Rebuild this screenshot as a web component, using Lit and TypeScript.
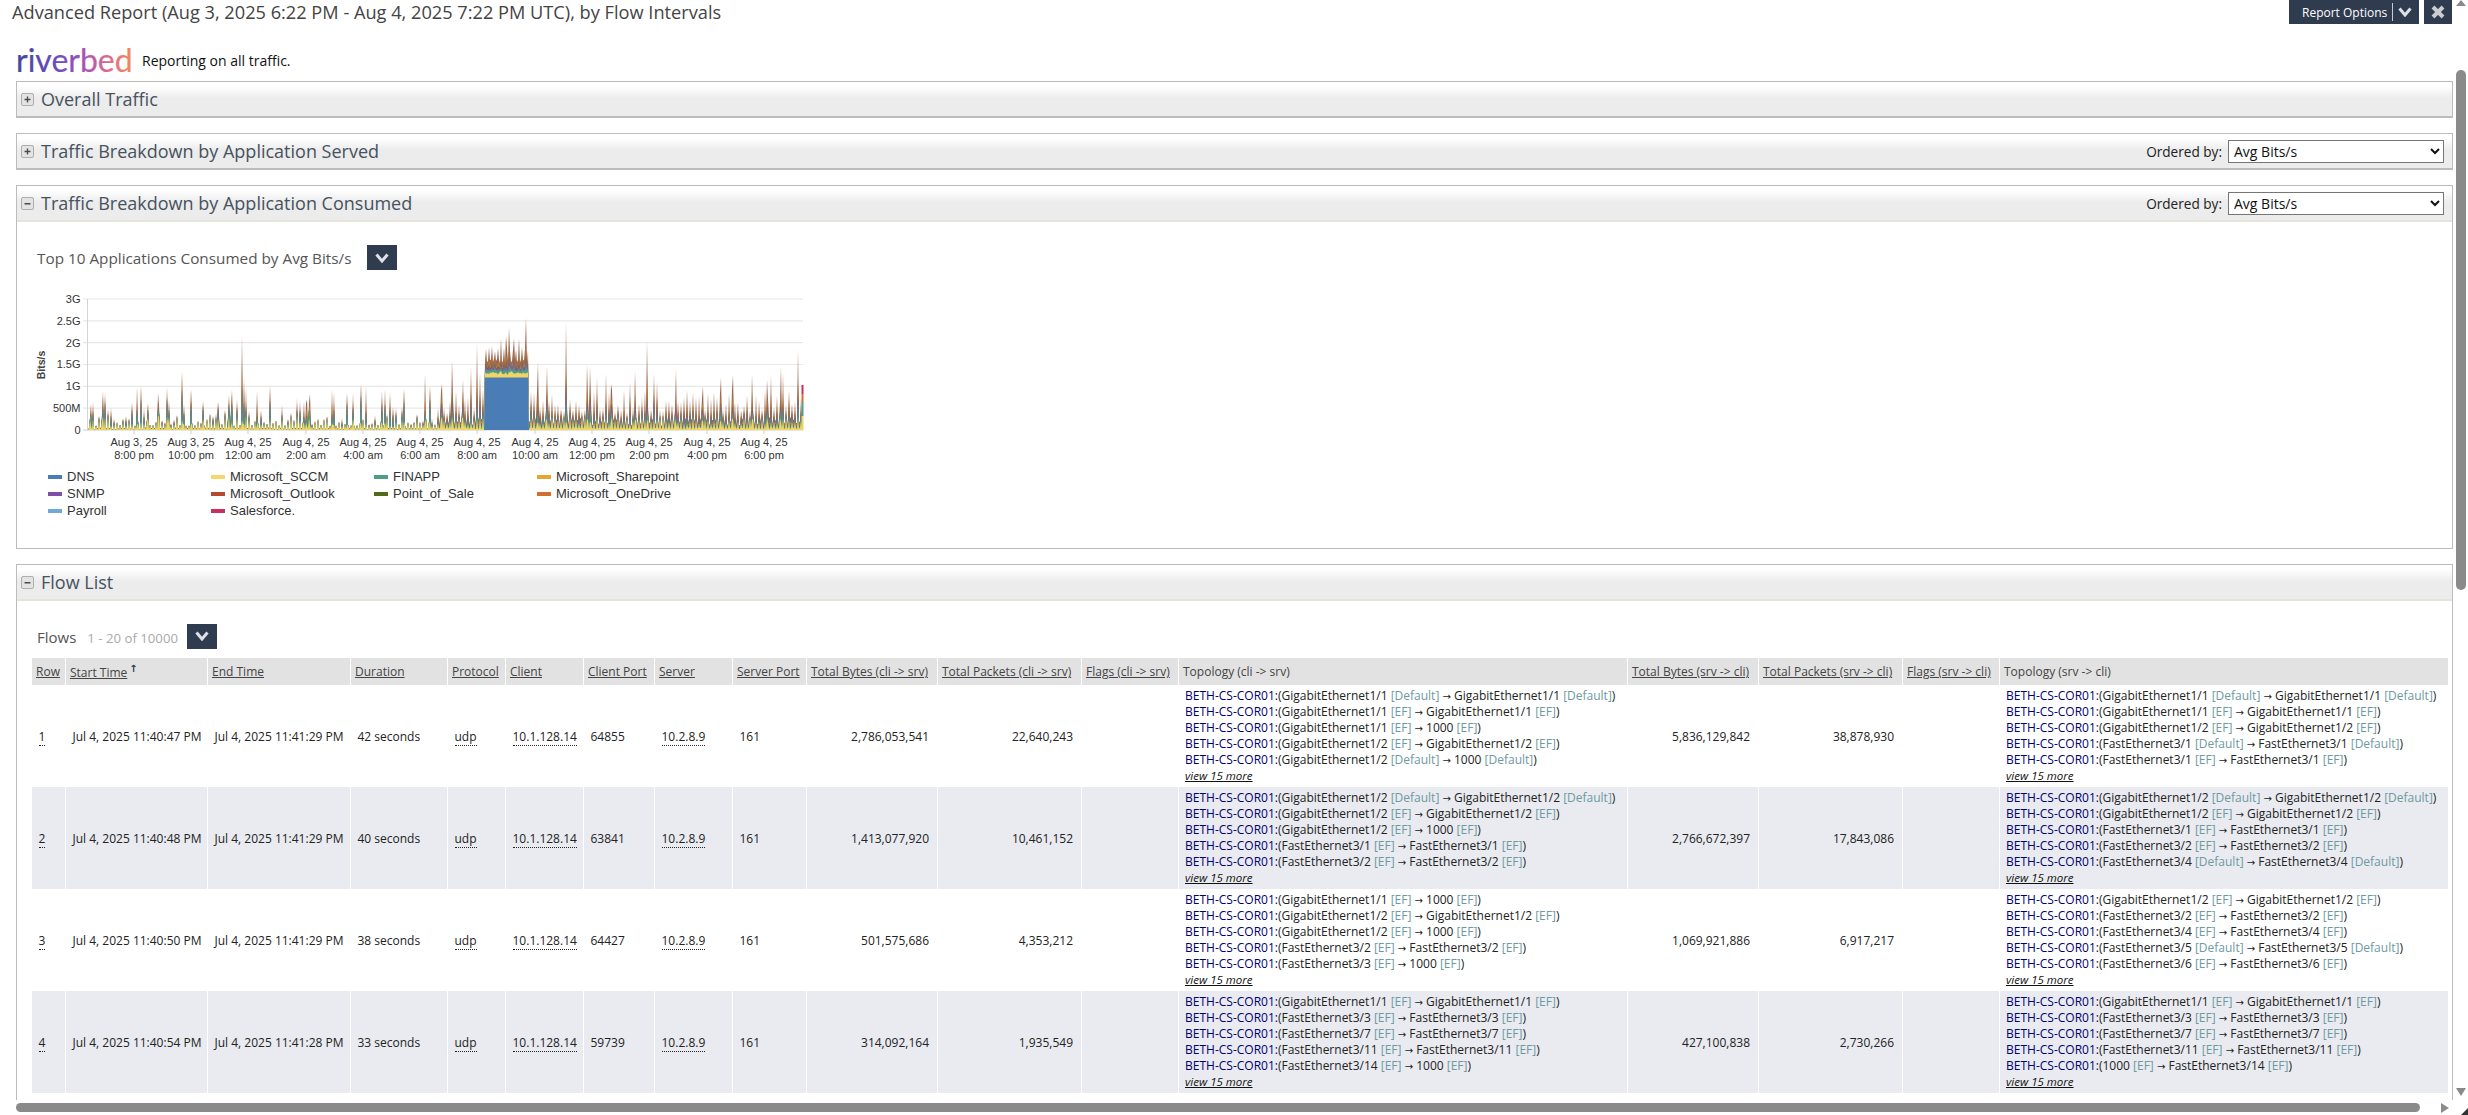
import { LitElement, html, css, svg } from "lit";
import { customElement } from "lit/decorators.js";

const COLS = [33, 142, 143, 97, 58, 78, 71, 78, 74, 131, 144, 97, 449, 131, 144, 97, 449];

const HEAD: [string, boolean][] = [
  ["Row", true], ["Start Time", true], ["End Time", true], ["Duration", true], ["Protocol", true],
  ["Client", true], ["Client Port", true], ["Server", true], ["Server Port", true],
  ["Total Bytes (cli -> srv)", true], ["Total Packets (cli -> srv)", true], ["Flags (cli -> srv)", true],
  ["Topology (cli -> srv)", false],
  ["Total Bytes (srv -> cli)", true], ["Total Packets (srv -> cli)", true], ["Flags (srv -> cli)", true],
  ["Topology (srv -> cli)", false],
];

interface Flow {
  n: string; start: string; end: string; dur: string; port: string;
  b1: string; p1: string; t1: string[]; b2: string; p2: string; t2: string[];
}

const ROWS: Flow[] = [
  { n: "1", start: "Jul 4, 2025 11:40:47 PM", end: "Jul 4, 2025 11:41:29 PM", dur: "42 seconds", port: "64855",
    b1: "2,786,053,541", p1: "22,640,243", b2: "5,836,129,842", p2: "38,878,930",
    t1: ["G1/1 D>G1/1 D", "G1/1 E>G1/1 E", "G1/1 E>1000 E", "G1/2 E>G1/2 E", "G1/2 D>1000 D"],
    t2: ["G1/1 D>G1/1 D", "G1/1 E>G1/1 E", "G1/2 E>G1/2 E", "F3/1 D>F3/1 D", "F3/1 E>F3/1 E"] },
  { n: "2", start: "Jul 4, 2025 11:40:48 PM", end: "Jul 4, 2025 11:41:29 PM", dur: "40 seconds", port: "63841",
    b1: "1,413,077,920", p1: "10,461,152", b2: "2,766,672,397", p2: "17,843,086",
    t1: ["G1/2 D>G1/2 D", "G1/2 E>G1/2 E", "G1/2 E>1000 E", "F3/1 E>F3/1 E", "F3/2 E>F3/2 E"],
    t2: ["G1/2 D>G1/2 D", "G1/2 E>G1/2 E", "F3/1 E>F3/1 E", "F3/2 E>F3/2 E", "F3/4 D>F3/4 D"] },
  { n: "3", start: "Jul 4, 2025 11:40:50 PM", end: "Jul 4, 2025 11:41:29 PM", dur: "38 seconds", port: "64427",
    b1: "501,575,686", p1: "4,353,212", b2: "1,069,921,886", p2: "6,917,217",
    t1: ["G1/1 E>1000 E", "G1/2 E>G1/2 E", "G1/2 E>1000 E", "F3/2 E>F3/2 E", "F3/3 E>1000 E"],
    t2: ["G1/2 E>G1/2 E", "F3/2 E>F3/2 E", "F3/4 E>F3/4 E", "F3/5 D>F3/5 D", "F3/6 E>F3/6 E"] },
  { n: "4", start: "Jul 4, 2025 11:40:54 PM", end: "Jul 4, 2025 11:41:28 PM", dur: "33 seconds", port: "59739",
    b1: "314,092,164", p1: "1,935,549", b2: "427,100,838", p2: "2,730,266",
    t1: ["G1/1 E>G1/1 E", "F3/3 E>F3/3 E", "F3/7 E>F3/7 E", "F3/11 E>F3/11 E", "F3/14 E>1000 E"],
    t2: ["G1/1 E>G1/1 E", "F3/3 E>F3/3 E", "F3/7 E>F3/7 E", "F3/11 E>F3/11 E", "1000 E>F3/14 E"] },
];

const LEGEND: [string, string][] = [
  ["DNS", "#4a7db5"], ["Microsoft_SCCM", "#f5d76e"], ["FINAPP", "#4f9d85"], ["Microsoft_Sharepoint", "#e5a530"],
  ["SNMP", "#7f4fa8"], ["Microsoft_Outlook", "#b5482e"], ["Point_of_Sale", "#4f6b1a"], ["Microsoft_OneDrive", "#d1702d"],
  ["Payroll", "#6fa8dc"], ["Salesforce.", "#c9305e"],
];

const TICKS: [number, string, string][] = [
  [134, "Aug 3, 25", "8:00 pm"], [191, "Aug 3, 25", "10:00 pm"], [248, "Aug 4, 25", "12:00 am"],
  [306, "Aug 4, 25", "2:00 am"], [363, "Aug 4, 25", "4:00 am"], [420, "Aug 4, 25", "6:00 am"],
  [477, "Aug 4, 25", "8:00 am"], [535, "Aug 4, 25", "10:00 am"], [592, "Aug 4, 25", "12:00 pm"],
  [649, "Aug 4, 25", "2:00 pm"], [707, "Aug 4, 25", "4:00 pm"], [764, "Aug 4, 25", "6:00 pm"],
];

const YL: [string, number][] = [["3G", 3], ["2.5G", 2.5], ["2G", 2], ["1.5G", 1.5], ["1G", 1], ["500M", 0.5], ["0", 0]];

const SPIKES: [number, number][] = [
  [91, .6], [93, .65], [103, .89], [105, .87], [108, .5], [132, .65], [137, .99], [141, 1.01], [148, .62], [158, .85],
  [167, 1.0], [169, .7], [182, 1.37], [184, .6], [191, .94], [203, .68], [218, .66], [229, .8], [232, .93], [242, 2.2],
  [244, 1.2], [246, .97], [257, .9], [270, 1.03], [304, .65], [307, .7], [310, .83], [332, .93], [334, .87], [347, .85],
  [353, .85], [361, 1.05], [366, 1.0], [382, .9], [385, .95], [390, .88], [404, .96], [425, 1.28], [430, 1.0], [442, 1.05],
  [452, 1.6], [463, 1.15], [471, 1.45], [477, 2.0], [480, 1.3], [501, 2.1], [506, 2.15], [509, 2.35], [514, 2.1], [519, 2.1],
  [526, 2.57], [538, 1.55], [547, 1.47], [566, 2.47], [587, 1.5], [590, 1.45], [597, 1.2], [606, 1.3], [611, 1.05], [630, 1.1],
  [635, 1.35], [647, 2.05], [654, 1.3], [657, 1.1], [676, 1.4], [703, 1.0], [721, 1.2], [733, 1.25], [752, 1.27], [767, 1.15],
  [771, 1.25], [781, 1.45], [783, 1.3], [798, 1.85],
];

function buildLayers() {
  let s = 12345;
  const r = () => { s = (s * 1664525 + 1013904223) >>> 0; return s / 4294967296; };
  const colours = ["#9c6a52", "#c07a3c", "#6f6a2e", "#8459a8", "#4f9d85", "#f0d565", "#4a7db5"];
  const layers: { c: string; pts: number[] }[] = colours.map(c => ({ c, pts: [] }));
  const xs: number[] = [];
  for (let x = 88; x <= 803; x += 1) {
    xs.push(x);
    const sp = SPIKES.find(p => p[0] === x);
    const peak = x % 3 === 0 || !!sp;
    const block = x >= 485 && x <= 528;
    const dense = x > 437;
    let t: number;
    if (block) t = 1.2 + (peak ? 0.6 + r() * 0.2 : 0.32 + r() * 0.12);
    else if (dense) t = peak ? 0.4 + r() * 0.55 : 0.1 + r() * 0.2;
    else t = peak ? 0.1 + r() * r() * 0.65 : 0.01 + r() * 0.05;
    if (sp) t = sp[1];
    const dns = block ? 1.2 : 0;
    const rest = Math.max(0, t - dns);
    let yel: number;
    if (block) yel = Math.min(rest, 0.07 + r() * 0.08);
    else if (dense) yel = Math.min(rest, peak ? 0.14 + r() * 0.16 : 0.02 + r() * 0.03);
    else yel = Math.min(rest, peak ? 0.08 + r() * 0.26 : rest * 0.5);
    const rem = rest - yel;
    const w = dense
      ? [0.1 + r() * 0.2, 0.05 + r() * 0.16, 0.05 + r() * 0.1, 0.06 + r() * 0.14]
      : [0.2 + r() * 0.5, 0.15 + r() * 0.2, 0.02, 0.02];
    const parts = [w[0], w[3], w[2], w[1]];
    const cum = [dns + yel];
    parts.forEach(p => cum.push(cum[cum.length - 1] + rem * p));
    layers[6].pts.push(dns);
    layers[5].pts.push(cum[0]);
    layers[4].pts.push(cum[1]);
    layers[3].pts.push(cum[2]);
    layers[2].pts.push(cum[3]);
    layers[1].pts.push(cum[4]);
    layers[0].pts.push(t);
  }
  const Y = (v: number) => 430 - v * 43.67;
  return layers.map(l => {
    const pts = l.pts.map((v, k) => `${xs[k]},${Y(v).toFixed(1)}`).join(" ");
    return { c: l.c, d: `88,430 ${pts} 803,430` };
  });
}
const LAYERS = buildLayers();

@customElement("topo-line")
class TopoLine extends LitElement {
  static properties = { spec: { type: String } };
  spec = "";
  static styles = css`
    :host { display: block; height: 16px; line-height: 16px; white-space: nowrap; }
    .dev { color: #00006e; }
    .q { color: #6d9aa0; }
    .arr { font-family: "DejaVu Sans", sans-serif; font-size: 10px; }
  `;
  private iface(code: string) {
    if (code === "1000") return "1000";
    return (code[0] === "G" ? "GigabitEthernet" : "FastEthernet") + code.slice(1);
  }
  private end(part: string) {
    const [c, q] = part.split(" ");
    return html`${this.iface(c)} <span class="q">[${q === "D" ? "Default" : "EF"}]</span>`;
  }
  render() {
    const [a, b] = this.spec.split(">");
    return html`<span class="dev">BETH-CS-COR01:</span>(${this.end(a)} <span class="arr">→</span> ${this.end(b)})`;
  }
}

@customElement("app-root")
export class AppRoot extends LitElement {
  static styles = css`
    :host {
      display: block; position: relative; width: 100vw; height: 100vh; overflow: hidden;
      background: #fff; font-family: "Open Sans", sans-serif; color: #333;
    }
    .page { display: flex; flex-direction: column; height: 1100px; padding: 0 15px 0 16px; box-sizing: border-box; }
    .top { display: flex; justify-content: space-between; height: 24px; margin: 0 1px 0 -4px; flex: none; }
    .title { font-size: 18.2px; line-height: 24px; color: #444; white-space: nowrap; }
    .top-btns { display: flex; gap: 5px; }
    .dk { background: #2f3b4f; color: #fff; display: flex; align-items: center; justify-content: center; }
    .opts { width: 130px; height: 24px; font-size: 12px; gap: 5px; justify-content: flex-start; padding-left: 13px; box-sizing: border-box; }
    .opts .sep { width: 1px; height: 18px; background: #c8ccd2; }
    .close { width: 28px; height: 24px; }
    .logo-row { display: flex; align-items: center; height: 57px; padding-top: 15px; box-sizing: border-box; flex: none; gap: 6px; }
    .logo { display: block; flex: none; overflow: visible; }
    .logo-note { font-size: 14px; color: #111; }
    .panel { border: 1px solid #bcbcbc; flex: none; background: #fff; }
    .panel.closed { height: 37px; box-sizing: border-box; margin-bottom: 15px; border-bottom-width: 2px; }
    .panel.open { margin-bottom: 15px; height: 364px; box-sizing: border-box; }
    .panel.last { flex: 1; min-height: 0; overflow: hidden; border-bottom: none; margin-bottom: 0; }
    .hdr {
      display: flex; align-items: center; height: 34px; padding: 0 8px 0 4px;
      background: linear-gradient(#fff 12%, #ececec 48%);
    }
    .panel.open .hdr, .panel.last .hdr { height: 34px; border-bottom: 2px solid #e4e5da; }
    .tgl {
      width: 13px; height: 13px; box-sizing: border-box; border: 1px solid #aeaeae; border-radius: 2px;
      background: #e3e3e3; margin-right: 7px; flex: none; display: block;
    }
    .hdr-t { font-size: 18px; color: #46525f; flex: 1; white-space: nowrap; }
    .ord { font-size: 13.6px; color: #222; margin-right: 6px; }
    select {
      width: 216px; height: 23px; font-family: "Open Sans", sans-serif; font-size: 14px; color: #111;
      background: #fff; padding: 0 0 0 1px;
    }
    .chart-t { display: flex; align-items: center; height: 25px; margin: 23px 0 0 20px; font-size: 15.3px; color: #555; }
    .chart-t .dk { width: 30px; height: 25px; margin-left: 16px; }
    svg.chart { display: block; width: 800px; height: 180px; margin-top: 15px; }
    .legend {
      display: grid; grid-template-columns: repeat(4, 163px); grid-auto-rows: 17px; margin: 3px 0 0 31px;
      font-family: "Liberation Sans", sans-serif; font-size: 13px; color: #333;
    }
    .li { display: flex; align-items: center; gap: 5px; line-height: 17px; }
    .sw { width: 14px; height: 4px; display: block; }
    .flows { display: flex; align-items: center; height: 25px; margin: 23px 0 0 20px; }
    .flows b { font-weight: 400; font-size: 15px; color: #555; margin-right: 11px; }
    .flows i { font-style: normal; font-size: 13.2px; color: #aaa; margin-right: 9px; margin-top: 3px; white-space: nowrap; }
    .flows .dk { width: 30px; height: 25px; margin-top: -1px; }
    .wrap { margin: 9px 0 0 15px; }
    table { border-collapse: separate; border-spacing: 0; table-layout: fixed; width: 2416px; font-size: 12px; color: #222; }
    th {
      background: #e2e2e2; font-weight: 400; height: 27px; padding: 0 0 0 4px; text-align: left; white-space: nowrap;
      border-left: 1px solid #fff; color: #444; overflow: hidden; box-sizing: border-box;
    }
    th:first-child { border-left: none; }
    th u { text-decoration: underline; }
    .sort { font-size: 10px; vertical-align: 5px; margin-left: 2px; color: #2f3b4f; font-family: "DejaVu Sans", sans-serif; font-weight: 700; }
    td {
      height: 102px; box-sizing: border-box; padding: 0 7px 0 6.5px; white-space: nowrap; border-left: 1px solid #fff; vertical-align: middle;
    }
    td:first-child { border-left: none; }
    tbody tr:nth-child(even) td { background: #e9ebf0; }
    td.num { text-align: right; padding-right: 8px; }
    td.topo { padding: 3px 7px 0 6px; vertical-align: top; }
    .dot { border-bottom: 1px dotted #222; }
    .more { display: block; height: 16px; line-height: 16px; font-style: italic; text-decoration: underline; color: #111; font-size: 11.5px; }
    .sb { position: absolute; background: #8a8a8a; }
    .sb.v { left: 2456px; top: 70px; width: 10px; height: 520px; border-radius: 5px; }
    .sb.h { left: 16px; top: 1103px; width: 2404px; height: 9px; border-radius: 5px; }
    .ar { position: absolute; display: block; }
    .ar.up { left: 2456px; top: 0; }
    .ar.down { left: 2456px; top: 1088px; }
    .ar.right { left: 2441px; top: 1103px; }
    .ar.corner { left: 2461px; top: 1108px; }
  `;

  private chev() {
    return html`<svg width="14" height="10" viewBox="0 0 14 10"><path d="M1.5 1.5 L7 8 L12.5 1.5" fill="none" stroke="#dde1e6" stroke-width="3"/></svg>`;
  }
  private plus(minus = false) {
    return html`<svg class="tgl" viewBox="0 0 13 13"><path d="${minus ? "M3 6h7v1.6H3z" : "M3 5.7h7v1.6H3z M5.7 3h1.6v7H5.7z"}" fill="#4a4a4a"/></svg>`;
  }
  private logo() {
    return html`<svg class="logo" width="120" height="36" viewBox="0 0 120 36">
      <defs><linearGradient id="lg" gradientUnits="userSpaceOnUse" x1="0" x2="116" y1="0" y2="0">
        <stop offset="0" stop-color="#45459a"/><stop offset=".35" stop-color="#6a4cc0"/>
        <stop offset=".58" stop-color="#a653b6"/><stop offset=".82" stop-color="#e06f86"/><stop offset="1" stop-color="#f08a5e"/>
      </linearGradient></defs>
      <text x="0" y="30" font-family="Lato, sans-serif" font-size="32" fill="url(#lg)" stroke="url(#lg)" stroke-width=".2">riverbed</text>
    </svg>`;
  }
  private chart() {
    return html`<svg class="chart" viewBox="17 285 800 180" font-family="'Liberation Sans', sans-serif" font-size="11" fill="#333">
      ${YL.map(([t, v]) => {
        const y = 430 - v * 43.67;
        return svg`<line x1="83" x2="803" y1="${y}" y2="${y}" stroke="${v === 0 ? "#cfcfcf" : "#e8e8e8"}" stroke-width="1.2"/>
          <text x="80.5" y="${y + 4}" text-anchor="end">${t}</text>`;
      })}
      <line x1="87.5" x2="87.5" y1="299" y2="430" stroke="#d4d4d4"/>
      ${LAYERS.map(l => svg`<polygon points="${l.d}" fill="${l.c}"/>`)}
      <rect x="801.5" y="416" width="2" height="14" fill="#f0d565"/>
      <rect x="801.5" y="402" width="2" height="14" fill="#4f9d85"/>
      <rect x="801.5" y="394" width="2" height="8" fill="#d1702d"/>
      <rect x="801.5" y="385" width="2" height="9" fill="#c9305e"/>
      ${TICKS.map(([x, a, b]) => svg`<line x1="${x}" x2="${x}" y1="430" y2="434" stroke="#cfcfcf"/>
        <text x="${x}" y="446" text-anchor="middle">${a}</text>
        <text x="${x}" y="459" text-anchor="middle">${b}</text>`)}
      <text transform="translate(45 365) rotate(-90)" text-anchor="middle" font-size="10.5" font-weight="700" fill="#444">Bits/s</text>
    </svg>`;
  }
  private topo(list: string[]) {
    return html`<td class="topo">${list.map(l => html`<topo-line .spec=${l}></topo-line>`)}<span class="more">view 15 more</span></td>`;
  }
  render() {
    return html`
      <div class="page">
        <div class="top">
          <div class="title">Advanced Report (Aug 3, 2025 6:22 PM - Aug 4, 2025 7:22 PM UTC), by Flow Intervals</div>
          <div class="top-btns">
            <div class="dk opts">Report Options<span class="sep"></span>${this.chev()}</div>
            <div class="dk close"><svg width="14" height="14" viewBox="0 0 14 14"><path d="M2 2 L12 12 M12 2 L2 12" stroke="#c9cdd3" stroke-width="4"/></svg></div>
          </div>
        </div>
        <div class="logo-row">${this.logo()}<span class="logo-note">Reporting on all traffic.</span></div>

        <section class="panel closed"><div class="hdr">${this.plus()}<span class="hdr-t">Overall Traffic</span></div></section>
        <section class="panel closed"><div class="hdr">${this.plus()}<span class="hdr-t">Traffic Breakdown by Application Served</span><span class="ord">Ordered by:</span><select><option>Avg Bits/s</option></select></div></section>
        <section class="panel open">
          <div class="hdr">${this.plus(true)}<span class="hdr-t">Traffic Breakdown by Application Consumed</span><span class="ord">Ordered by:</span><select><option>Avg Bits/s</option></select></div>
          <div class="chart-t">Top 10 Applications Consumed by Avg Bits/s<div class="dk">${this.chev()}</div></div>
          ${this.chart()}
          <div class="legend">${LEGEND.map(([n, c]) => html`<div class="li"><span class="sw" style="background:${c}"></span>${n}</div>`)}</div>
        </section>
        <section class="panel last">
          <div class="hdr">${this.plus(true)}<span class="hdr-t">Flow List</span></div>
          <div class="flows"><b>Flows</b><i>1 - 20 of 10000</i><div class="dk">${this.chev()}</div></div>
          <div class="wrap">
            <table>
              <colgroup>${COLS.map(w => html`<col style="width:${w}px">`)}</colgroup>
              <thead><tr>${HEAD.map(([t, u], i) => html`<th>${u ? html`<u>${t}</u>` : t}${i === 1 ? html`<span class="sort">↑</span>` : ""}</th>`)}</tr></thead>
              <tbody>
                ${ROWS.map(r => html`<tr>
                  <td><span class="dot">${r.n}</span></td>
                  <td>${r.start}</td><td>${r.end}</td><td>${r.dur}</td>
                  <td><span class="dot">udp</span></td>
                  <td><span class="dot">10.1.128.14</span></td>
                  <td>${r.port}</td>
                  <td><span class="dot">10.2.8.9</span></td>
                  <td>161</td>
                  <td class="num">${r.b1}</td><td class="num">${r.p1}</td><td></td>
                  ${this.topo(r.t1)}
                  <td class="num">${r.b2}</td><td class="num">${r.p2}</td><td></td>
                  ${this.topo(r.t2)}
                </tr>`)}
              </tbody>
            </table>
          </div>
        </section>
      </div>
      <div class="sb v"></div>
      <div class="sb h"></div>
      <svg class="ar up" width="10" height="6" viewBox="0 0 10 6"><path d="M5 0 L10 6 H0 Z" fill="#8a8a8a"/></svg>
      <svg class="ar down" width="10" height="8" viewBox="0 0 10 8"><path d="M0 0 H10 L5 8 Z" fill="#8a8a8a"/></svg>
      <svg class="ar right" width="8" height="10" viewBox="0 0 8 10"><path d="M0 0 L8 5 L0 10 Z" fill="#8a8a8a"/></svg>
      <svg class="ar corner" width="7" height="7" viewBox="0 0 7 7"><path d="M7 0 V7 H0 Z" fill="#333"/></svg>
    `;
  }
}
